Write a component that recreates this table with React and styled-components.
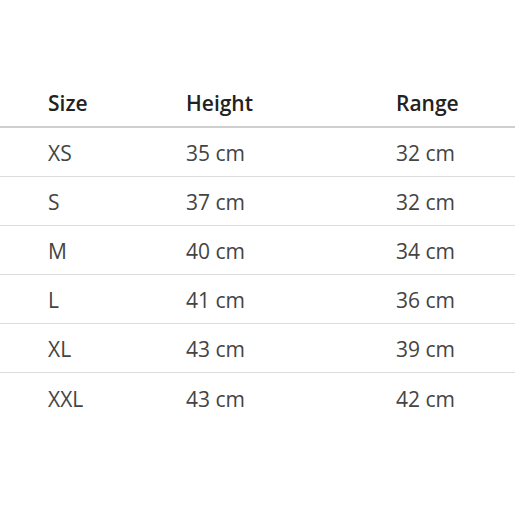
import React from 'react'
import styled, { createGlobalStyle } from 'styled-components'

const GlobalStyle = createGlobalStyle`
  *, *::before, *::after {
    box-sizing: border-box;
  }
  body {
    margin: 0;
    background: #fff;
    font-family: "Open Sans", "Liberation Sans", sans-serif;
  }
`

const Page = styled.div`
  padding-top: 78px;
`
const Table = styled.div`
  display: grid;
  grid-template-columns: 186px 210px 1fr;
`
const HeadCell = styled.div`
  height: 50px;
  display: flex;
  align-items: center;
  padding-left: ${p => (p.first ? '48px' : '0')};
  padding-top: 1px;
  border-bottom: 2px solid #cfcfcf;
  font-size: 21px;
  font-weight: 600;
  color: #222;
`
const Cell = styled.div`
  height: 49px;
  display: flex;
  align-items: center;
  padding-left: ${p => (p.first ? '48px' : '0')};
  padding-top: 2px;
  border-bottom: ${p => (p.last ? 'none' : '1px solid #dcdcdc')};
  font-size: 21px;
  color: #444;
`

const rows = [
  ['XS', '35 cm', '32 cm'],
  ['S', '37 cm', '32 cm'],
  ['M', '40 cm', '34 cm'],
  ['L', '41 cm', '36 cm'],
  ['XL', '43 cm', '39 cm'],
  ['XXL', '43 cm', '42 cm'],
]

export default function App() {
  return (
    <Page>
      <GlobalStyle />
      <Table>
        <HeadCell first>Size</HeadCell>
        <HeadCell>Height</HeadCell>
        <HeadCell>Range</HeadCell>
        {rows.map((r, i) =>
          r.map((v, j) => (
            <Cell key={i + '-' + j} first={j === 0} last={i === rows.length - 1}>
              {v}
            </Cell>
          ))
        )}
      </Table>
    </Page>
  )
}
